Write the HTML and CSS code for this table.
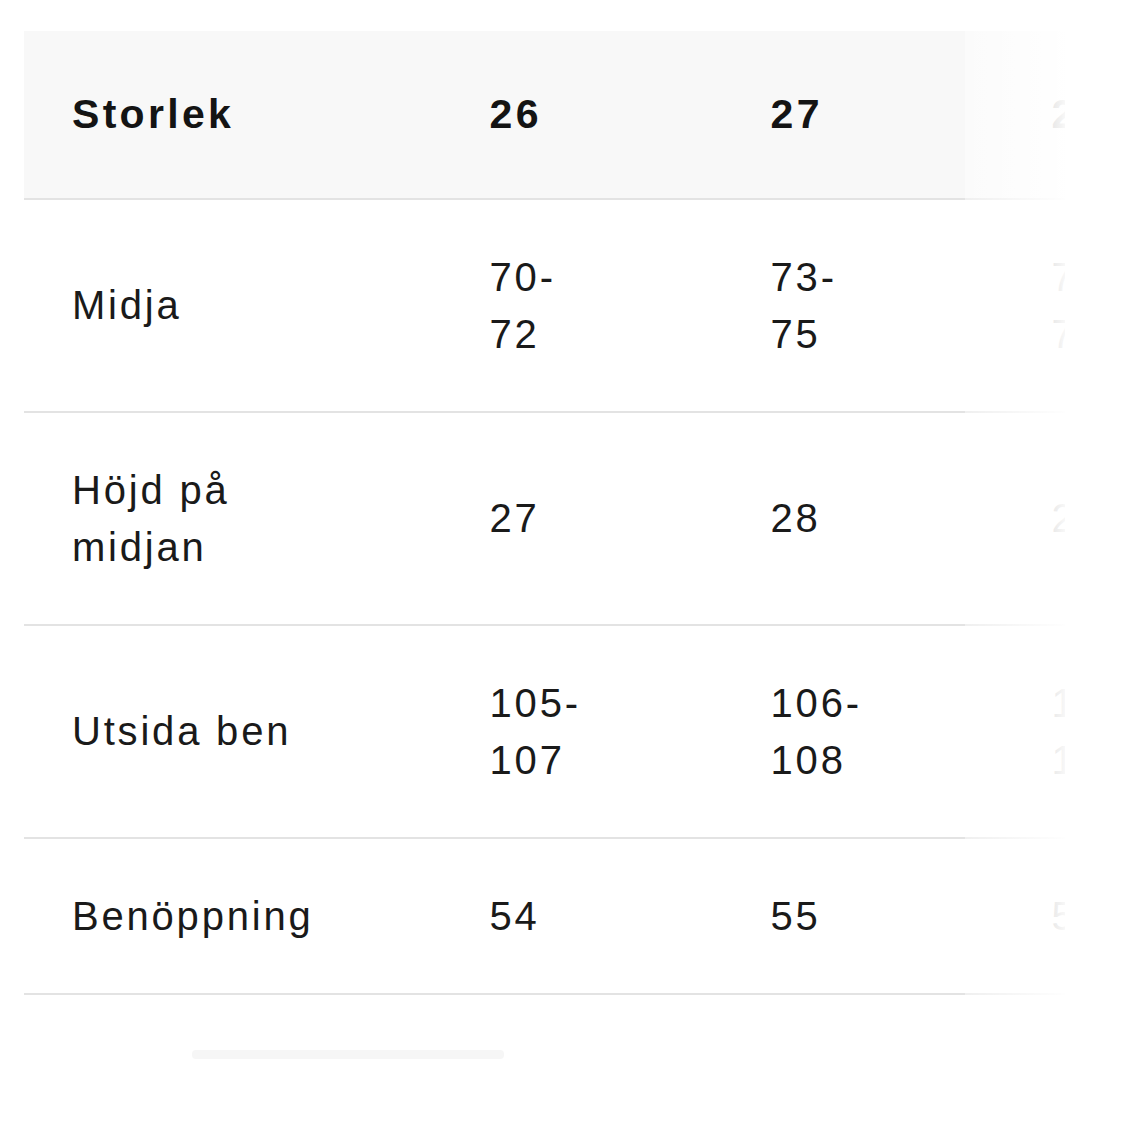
FILE: index.html
```html
<!DOCTYPE html>
<html lang="sv">
<head>
<meta charset="utf-8">
<title>Storlekstabell</title>
<link rel="stylesheet" href="styles.css">
</head>
<body>
<div class="page">
  <div class="scroller">
    <table class="sizes">
      <thead>
        <tr>
          <th class="label">Storlek</th>
          <th>26</th><th>27</th><th>28</th><th>29</th><th>30</th>
        </tr>
      </thead>
      <tbody>
        <tr>
          <td class="label">Midja</td>
          <td>70-72</td><td>73-75</td><td>76-78</td><td>79-81</td><td>82-84</td>
        </tr>
        <tr>
          <td class="label">Höjd på midjan</td>
          <td>27</td><td>28</td><td>29</td><td>30</td><td>31</td>
        </tr>
        <tr>
          <td class="label">Utsida ben</td>
          <td>105-107</td><td>106-108</td><td>107-109</td><td>108-110</td><td>109-111</td>
        </tr>
        <tr>
          <td class="label">Benöppning</td>
          <td>54</td><td>55</td><td>56</td><td>57</td><td>58</td>
        </tr>
      </tbody>
    </table>
    <div class="fade"></div>
  </div>
  <div class="scrollbar"><div class="thumb"></div></div>
</div>
</body>
</html>
```

FILE: styles.css
```css
html, body {
  margin: 0;
  padding: 0;
  background: #ffffff;
}

.page {
  padding: 31px 0 0 24px;
  font-family: "Liberation Sans", Arial, Helvetica, sans-serif;
  color: #1a1a1a;
}

.scroller {
  position: relative;
  width: 1041px;
  overflow: hidden;
}

.sizes {
  border-collapse: collapse;
  table-layout: fixed;
  width: max-content;
}

.sizes th,
.sizes td {
  box-sizing: border-box;
  width: 281px;
  padding: 48.5px 133px 48.5px 48px;
  text-align: left;
  vertical-align: middle;
  font-size: 40px;
  line-height: 57px;
  letter-spacing: 2.8px;
  border-bottom: 2px solid #e3e3e3;
  font-weight: normal;
}

.sizes .label {
  width: 398px;
  padding-right: 128px;
}

.sizes thead th {
  background: #f8f8f8;
  font-weight: bold;
  font-size: 41px;
  letter-spacing: 3.3px;
  padding-top: 55px;
  padding-bottom: 55px;
  color: #141414;
}

.fade {
  position: absolute;
  top: 0;
  right: 0;
  bottom: 0;
  width: 100px;
  background: linear-gradient(to right, rgba(255,255,255,0.45), rgba(255,255,255,0.97));
  pointer-events: none;
}

.scrollbar {
  margin: 55px 0 0 168px;
  width: 312px;
  height: 9px;
}

.thumb {
  width: 100%;
  height: 100%;
  border-radius: 4px;
  background: #f6f6f6;
}
```
